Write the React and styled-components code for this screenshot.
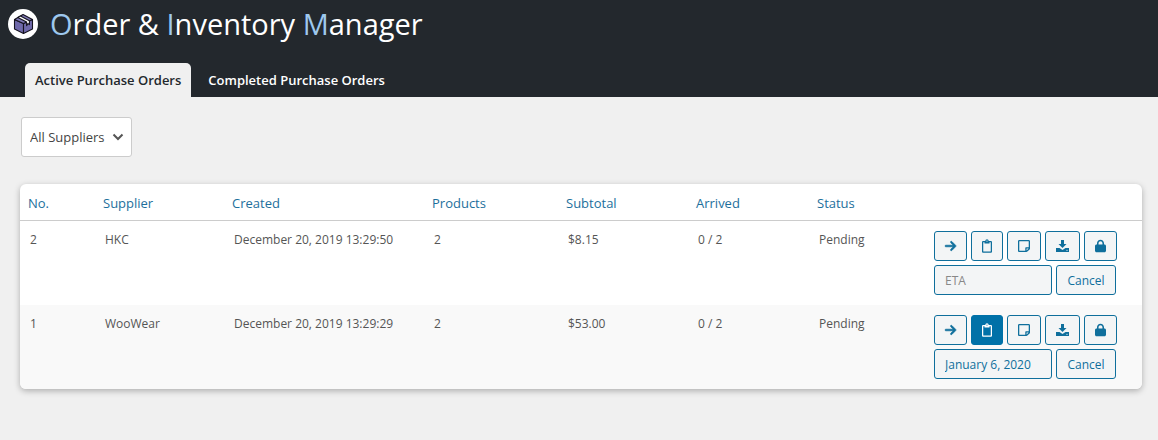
import React from 'react';
import styled, { createGlobalStyle, css } from 'styled-components';
import { FaArrowRight, FaLock } from 'react-icons/fa6';
import { FaRegClipboard, FaRegStickyNote } from 'react-icons/fa';

const GlobalStyle = createGlobalStyle`
  *, *::before, *::after { box-sizing: border-box; }
  body {
    margin: 0;
    background: #f0f0f0;
    color: #555;
    font-family: "Open Sans", "Noto Sans", sans-serif;
    font-size: 12px;
    line-height: 18px;
  }
  button, input, select { font: inherit; }
`;

const Header = styled.header`
  background: #23282d;
`;

const Brand = styled.div`
  display: flex;
  align-items: center;
  gap: 12px;
  height: 48px;
  padding-left: 8px;
  margin-bottom: 15px;
`;

const Logo = styled.svg`
  width: 30px;
  height: 30px;
`;

const Title = styled.h1`
  margin: 0;
  color: #fff;
  font-size: 29px;
  font-weight: 400;
  line-height: 46px;
  white-space: nowrap;
`;

const Initial = styled.span`
  color: #9ec8ee;
`;

const Tabs = styled.nav`
  display: flex;
  gap: 7px;
  padding-left: 25px;
`;

const Tab = styled.a`
  padding: 8px 10px;
  border-radius: 5px 5px 0 0;
  color: #fff;
  font-size: 13px;
  font-weight: 600;
  line-height: 18px;
  text-decoration: none;
  white-space: nowrap;
  ${({ $active }) => $active && css`
    background: #f0f0f0;
    color: #23282d;
  `}
`;

const Main = styled.main`
  padding: 20px 16px 20px 20px;
`;

const Filter = styled.div`
  display: inline-grid;
  align-items: center;
  margin: 0 0 27px 1px;
`;

const Select = styled.select`
  grid-area: 1 / 1;
  width: 111px;
  height: 40px;
  padding: 0 24px 0 8px;
  appearance: none;
  border: 1px solid #ccc;
  border-radius: 3px;
  background: #fff;
  color: #444;
  font-size: 13px;
`;

const Chevron = styled.svg`
  grid-area: 1 / 1;
  justify-self: end;
  width: 12px;
  height: 8px;
  margin-right: 8px;
  pointer-events: none;
`;

const Card = styled.section`
  overflow: hidden;
  border-radius: 6px;
  background: #fff;
  box-shadow: 0 2px 6px rgba(0, 0, 0, 0.28);
`;

const Table = styled.table`
  width: 100%;
  table-layout: fixed;
  border-collapse: separate;
  border-spacing: 0;
`;

const HeadCell = styled.th`
  width: ${({ $width }) => $width}px;
  height: 37px;
  padding: 10px 8px 8px;
  border-bottom: 1px solid #ccc;
  font-size: 13px;
  font-weight: 400;
  text-align: left;
`;

const SortLink = styled.a`
  color: #1d6f9c;
  text-decoration: none;
`;

const Row = styled.tr`
  &:nth-child(even) { background: #f9f9f9; }
`;

const Cell = styled.td`
  padding: 10px;
  vertical-align: top;
  white-space: nowrap;
`;

const Actions = styled.div`
  display: flex;
  flex-direction: column;
  gap: 4px;
`;

const ActionLine = styled.div`
  display: flex;
  gap: 4px;
`;

const control = css`
  height: 30px;
  padding: 0 10px;
  border: 1px solid #0f6f9c;
  border-radius: 3px;
  background: #f3f5f6;
  color: #0f6f9c;
`;

const Button = styled.button`
  ${control}
  display: inline-flex;
  align-items: center;
  justify-content: center;
  cursor: pointer;
  ${({ $active }) => $active && css`
    background: #0071a8;
    border-color: #0071a8;
    color: #fff;
  `}
`;

const TextButton = styled(Button)`
  min-width: 60px;
  padding-top: 2px;
`;

const IconButton = styled(Button)`
  svg {
    width: ${({ $icon }) => $icon}px;
    height: 14px;
    overflow: visible;
  }
`;

const ArrowIcon = styled(FaArrowRight)`
  stroke: currentColor;
  stroke-width: 28px;
`;

const DateInput = styled.input`
  ${control}
  width: 118px;
  &::placeholder { color: #888; opacity: 1; }
`;

const BoxLogo = () => (
  <Logo viewBox="0 0 30 30" aria-hidden="true">
    <circle cx="15" cy="15" r="15" fill="#fff" />
    <g stroke="#15131f" strokeWidth="1.1" strokeLinejoin="round">
      <path d="M6.500 10.500 15.500 14.500V24.500L6.500 20Z" fill="#6f69aa" />
      <path d="M15.500 14.500 24.500 10.500V20L15.500 24.500Z" fill="#6f69aa" />
      <path d="M6.500 10.500 15 5.500 24.500 10.500 15.500 14.500Z" fill="#7f79b5" />
      <path d="M9.800 8.600 12.400 7.100 21.400 11.700V15.600L20 14.600 18.600 16.600V13Z" fill="#fff" />
    </g>
  </Logo>
);

const DownloadIcon = () => (
  <svg viewBox="0 0 13 14" fill="currentColor" aria-hidden="true">
    <path d="M5 1h3v4h2.500L6.500 9 2.500 5H5z" />
    <path d="M0 9h3.500L6.500 11 9.500 9H13V13H0Z" />
    <circle cx="11" cy="11.300" r=".6" fill="#f3f5f6" />
  </svg>
);

const columns = [
  ['No.', 75],
  ['Supplier', 129],
  ['Created', 200],
  ['Products', 134],
  ['Subtotal', 130],
  ['Arrived', 121],
  ['Status', 115],
  ['', 218],
];

const orders = [
  { no: 2, supplier: 'HKC', created: 'December 20, 2019 13:29:50', products: 2, subtotal: '$8.15', arrived: '0 / 2', status: 'Pending', eta: '', noted: false },
  { no: 1, supplier: 'WooWear', created: 'December 20, 2019 13:29:29', products: 2, subtotal: '$53.00', arrived: '0 / 2', status: 'Pending', eta: 'January 6, 2020', noted: true },
];

const OrderActions = ({ order }) => (
  <Actions>
    <ActionLine>
      <IconButton type="button" $icon={11} aria-label="Open order"><ArrowIcon /></IconButton>
      <IconButton type="button" $icon={10} $active={order.noted} aria-label="Order details"><FaRegClipboard /></IconButton>
      <IconButton type="button" $icon={12} aria-label="Notes"><FaRegStickyNote /></IconButton>
      <IconButton type="button" $icon={13} aria-label="Download"><DownloadIcon /></IconButton>
      <IconButton type="button" $icon={11} aria-label="Lock"><FaLock /></IconButton>
    </ActionLine>
    <ActionLine>
      <DateInput type="text" placeholder="ETA" defaultValue={order.eta} aria-label={`ETA for order ${order.no}`} />
      <TextButton type="button">Cancel</TextButton>
    </ActionLine>
  </Actions>
);

export default function App() {
  return (
    <>
      <GlobalStyle />
      <Header>
        <Brand>
          <BoxLogo />
          <Title>
            <Initial>O</Initial>rder &amp; <Initial>I</Initial>nventory <Initial>M</Initial>anager
          </Title>
        </Brand>
        <Tabs>
          <Tab href="#active" $active>Active Purchase Orders</Tab>
          <Tab href="#completed">Completed Purchase Orders</Tab>
        </Tabs>
      </Header>
      <Main>
        <Filter>
          <Select aria-label="Supplier">
            <option>All Suppliers</option>
            <option>HKC</option>
            <option>WooWear</option>
          </Select>
          <Chevron viewBox="0 0 12 8" aria-hidden="true">
            <path d="M1.500 1.500 6 6 10.500 1.500" fill="none" stroke="#555" strokeWidth="2" />
          </Chevron>
        </Filter>
        <Card>
          <Table>
            <thead>
              <tr>
                {columns.map(([label, width]) => (
                  <HeadCell key={width} $width={width} scope="col">
                    {label && <SortLink href="#sort">{label}</SortLink>}
                  </HeadCell>
                ))}
              </tr>
            </thead>
            <tbody>
              {orders.map((order) => (
                <Row key={order.no}>
                  <Cell>{order.no}</Cell>
                  <Cell>{order.supplier}</Cell>
                  <Cell>{order.created}</Cell>
                  <Cell>{order.products}</Cell>
                  <Cell>{order.subtotal}</Cell>
                  <Cell>{order.arrived}</Cell>
                  <Cell>{order.status}</Cell>
                  <Cell><OrderActions order={order} /></Cell>
                </Row>
              ))}
            </tbody>
          </Table>
        </Card>
      </Main>
    </>
  );
}
